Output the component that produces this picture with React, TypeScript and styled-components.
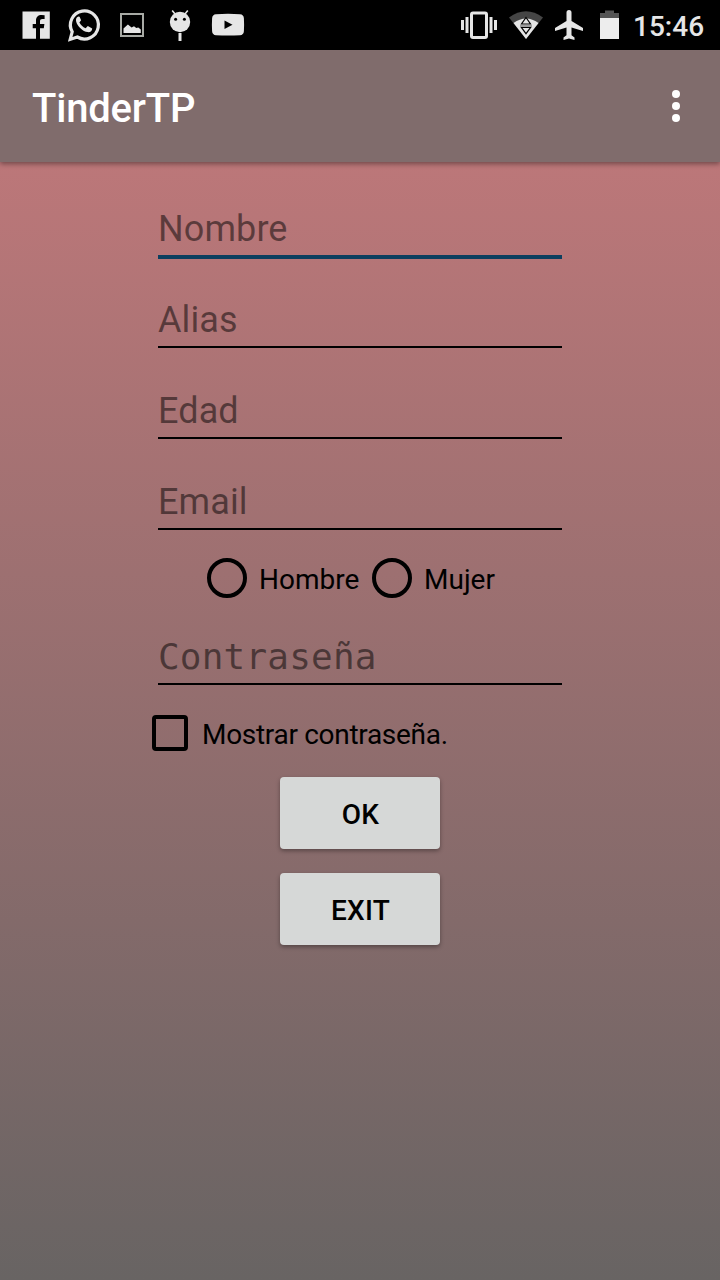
import React from "react";
import styled, { createGlobalStyle } from "styled-components";

const GlobalStyle = createGlobalStyle`
  * { box-sizing: border-box; }
  body { margin: 0; font-family: Roboto, "Liberation Sans", sans-serif; }
`;

const Screen = styled.div`
  width: 720px;
  height: 1280px;
  display: flex;
  flex-direction: column;
  overflow: hidden;
  background: #000;
`;

const StatusBar = styled.header`
  height: 50px;
  flex: none;
  display: flex;
  justify-content: space-between;
  background: #000;
  color: #e6e6e6;
`;

const StatusIcons = styled.div`
  display: flex;
  svg { display: block; flex: none; }
`;

const Clock = styled.time`
  width: 87px;
  font-size: 28px;
  font-weight: 500;
  line-height: 53px;
  white-space: nowrap;
`;

const AppBar = styled.div`
  position: relative;
  height: 112px;
  flex: none;
  display: flex;
  align-items: center;
  justify-content: space-between;
  padding: 0 40px 0 32px;
  background: #806c6c;
  box-shadow: 0 2px 5px rgba(0, 0, 0, 0.4);
`;

const Title = styled.h1`
  margin: 5px 0 0;
  color: #fff;
  font-size: 40px;
  font-weight: 500;
  letter-spacing: -0.2px;
  line-height: 49px;
`;

const MenuButton = styled.button`
  display: flex;
  flex-direction: column;
  gap: 4px;
  padding: 0;
  border: 0;
  background: none;
`;

const Dot = styled.span`
  width: 8px;
  height: 8px;
  border-radius: 50%;
  background: #fff;
`;

const Content = styled.form`
  flex: 1;
  display: flex;
  flex-direction: column;
  align-items: center;
  padding-top: 34px;
  background: linear-gradient(180deg, #bc7779 0%, #686463 100%);
`;

const Field = styled.label<{ $focused?: boolean }>`
  width: 404px;
  height: ${(p) => (p.$focused ? 63 : 62)}px;
  margin-bottom: ${(p) => (p.$focused ? 27 : 29)}px;
  border-bottom: ${(p) => (p.$focused ? "4px solid #0c3f5f" : "2px solid #000")};
`;

const Hint = styled.span<{ $mono?: boolean; $focused?: boolean }>`
  display: block;
  padding-top: ${(p) => (p.$focused ? 12 : 13)}px;
  color: rgba(0, 0, 0, 0.5);
  font-family: ${(p) => (p.$mono ? '"DejaVu Sans Mono", monospace' : "inherit")};
  font-size: 36px;
  letter-spacing: ${(p) => (p.$mono ? 0.2 : 0.1)}px;
  line-height: 42px;
  white-space: nowrap;
`;

const RadioRow = styled.div`
  display: flex;
  align-items: center;
  width: 306px;
  height: 40px;
  margin: -1px 0 25px;
`;

const Option = styled.label<{ $width?: number }>`
  display: flex;
  align-items: center;
  gap: 12px;
  width: ${(p) => (p.$width ? `${p.$width}px` : "auto")};
`;

const Radio = styled.span`
  width: 40px;
  height: 40px;
  flex: none;
  border: 4px solid #000;
  border-radius: 50%;
`;

const Checkbox = styled.span`
  width: 36px;
  height: 36px;
  flex: none;
  margin: 0 2px 1px 0;
  border: 4px solid #000;
  border-radius: 4px;
`;

const OptionText = styled.span<{ $tight?: boolean }>`
  padding-top: ${(p) => (p.$tight ? 2 : 3)}px;
  color: #000;
  font-size: 28px;
  letter-spacing: ${(p) => (p.$tight ? "-0.3px" : "0")};
  line-height: ${(p) => (p.$tight ? 35 : 34)}px;
  white-space: nowrap;
`;

const CheckRow = styled.div`
  width: 416px;
  height: 36px;
  margin: 1px 0 26px;
`;

const Button = styled.button`
  width: 160px;
  height: 72px;
  margin-bottom: 24px;
  padding: 3px 0 0 1px;
  border: 0;
  border-radius: 4px;
  background: #d6d8d7;
  box-shadow: 0 2px 4px rgba(0, 0, 0, 0.35);
  color: #000;
  font: 500 28px Roboto, "Liberation Sans", sans-serif;
  letter-spacing: 0.2px;
`;

const NotificationIcons = () => (
  <svg width="260" height="50" fill="#e6e6e6">
    <path d="M22.500 11.500h27.300v27.300H40V28.200h3.800l.6-4.200H40v-2.600c0-1.500.7-2.300 2.400-2.300h2.200v-3.900q-1.500-.3-3-.3c-3.500 0-5.600 2-5.600 5.600V24h-3.300v4.200H36v10.600H22.500z" />
    <path d="m70.200 39.400 2-7.600A14 14 0 1 1 77.300 37z" fill="none" stroke="#e6e6e6" strokeWidth="3.200" />
    <path d="M78.300 16.500c-1.900.7-2.600 2.600-2.200 4.700 1.100 5 6.700 10.300 11.600 10.900 2.500.3 4.500-1 4.500-3.700l-4.400-2.400-2.200 2.300c-2.900-1.200-4.900-3.300-6.200-5.700l1.700-2.300-1.500-3.600z" />
    <path d="M121 14h22v22h-22z" fill="none" stroke="#a8aaa5" strokeWidth="2" />
    <path d="M123.500 33v-4.600l4.400-4 3.700 3 2.400-1.200 2.300 1.800 2-.4 2.500 2V33z" />
    <circle cx="180" cy="22" r="10.200" />
    <path d="m175 14-2.800-3.500m12.800 3.500 2.800-3.500" stroke="#e6e6e6" strokeWidth="1.6" />
    <circle cx="175.600" cy="19.200" r="1.500" fill="#000" />
    <circle cx="184.400" cy="19.200" r="1.500" fill="#000" />
    <path d="M178.500 33h3v8h-3z" />
    <path d="M216 14.200q12-.8 24 0 3.600.3 3.900 4 .4 6.500 0 13-.3 3.700-3.900 4-12 .8-24 0-3.600-.3-3.900-4-.4-6.500 0-13 .3-3.700 3.900-4z" />
    <path d="m224.500 20.500 8 4.300-8 4.300z" fill="#000" />
  </svg>
);

const SystemIcons = () => (
  <svg width="173" height="50" viewBox="460 0 173 50" fill="#e6e6e6">
    <path d="M461 20h3v10h-3zM465.500 17h3v16h-3zM489.500 17h3v16h-3zM494 20h3v10h-3z" />
    <rect x="471.500" y="13" width="15" height="24.500" rx="1.500" fill="none" stroke="#e6e6e6" strokeWidth="3" />
    <path d="M526 39 509 17.500Q526 5 543 17.500z" fill="#454545" />
    <path d="m526 39-12.500-16q12.500-9 25 0z" />
    <path d="m526 17.500 4.500 6.500h-9zM521.500 27.500h9l-4.500 6.200z" stroke="#000" strokeWidth="1.200" />
    <path d="M520 26h12" stroke="#555" strokeWidth="1" />
    <path d="M583 31v-3l-11.500-7v-8.400a2.500 2.500 0 0 0-5 0V21L555 28v3l11.500-3.600v7.800l-3 2.200V40l5.500-1.500 5.500 1.500v-2.600l-3-2.200v-7.800z" />
    <path d="M600 18v-5h5v-2.500h9V13h5v5z" fill="#555" />
    <path d="M600 18h19v21h-19z" fill="#ededed" />
  </svg>
);

export default function App() {
  return (
    <>
      <GlobalStyle />
      <Screen>
        <StatusBar>
          <StatusIcons><NotificationIcons /></StatusIcons>
          <StatusIcons>
            <SystemIcons />
            <Clock>15:46</Clock>
          </StatusIcons>
        </StatusBar>
        <AppBar>
          <Title>TinderTP</Title>
          <MenuButton type="button" aria-label="Menú"><Dot /><Dot /><Dot /></MenuButton>
        </AppBar>
        <Content>
          <Field $focused><Hint $focused>Nombre</Hint></Field>
          <Field><Hint>Alias</Hint></Field>
          <Field><Hint>Edad</Hint></Field>
          <Field><Hint>Email</Hint></Field>
          <RadioRow>
            <Option $width={165}><Radio /><OptionText>Hombre</OptionText></Option>
            <Option><Radio /><OptionText>Mujer</OptionText></Option>
          </RadioRow>
          <Field><Hint $mono>Contraseña</Hint></Field>
          <CheckRow>
            <Option><Checkbox /><OptionText $tight>Mostrar contraseña.</OptionText></Option>
          </CheckRow>
          <Button type="button">OK</Button>
          <Button type="button">EXIT</Button>
        </Content>
      </Screen>
    </>
  );
}
